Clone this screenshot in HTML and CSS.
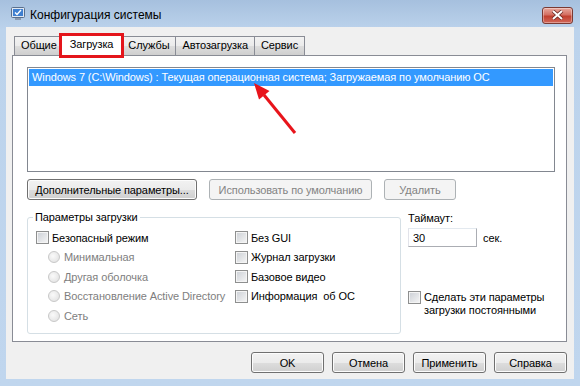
FILE: index.html
```html
<!DOCTYPE html>
<html lang="ru">
<head>
  <meta charset="UTF-8" />
  <title>Конфигурация системы</title>
  <link rel="stylesheet" href="styles.css">
</head>
<body>
  <div class="window">

    <!-- Title bar -->
    <div class="titlebar">
      <svg class="app-icon" width="14" height="14" viewBox="0 0 14 14">
        <rect x="0.5" y="0.5" width="13" height="10" rx="1" fill="#dfe8f3" stroke="#5a6f8c"/>
        <rect x="2" y="2" width="10" height="7" fill="#3f7fd0"/>
        <path d="M4 5.5 L6 7.5 L10 3" stroke="#fff" stroke-width="1.4" fill="none"/>
        <rect x="4" y="11" width="6" height="2" fill="#8a9ab0"/>
      </svg>
      <span class="title">Конфигурация системы</span>
      <div class="close-btn">
        <svg width="13" height="10" viewBox="0 0 13 10">
          <path d="M2 1 L11 9 M11 1 L2 9" stroke="#6a2a24" stroke-width="3.6"/>
          <path d="M2 1 L11 9 M11 1 L2 9" stroke="#fff" stroke-width="2"/>
        </svg>
      </div>
    </div>

    <div class="client">
      <div class="tabs">
        <div class="tab">Общие</div>
        <div class="tab active">Загрузка</div>
        <div class="tab">Службы</div>
        <div class="tab">Автозагрузка</div>
        <div class="tab">Сервис</div>
      </div>

      <div class="panel">
        <div class="listbox">
          <div class="list-item selected">Windows 7 (C:\Windows) : Текущая операционная система; Загружаемая по умолчанию ОС</div>
        </div>

        <div class="list-actions">
          <button class="btn btn-wide">Дополнительные параметры...</button>
          <button class="btn btn-default" disabled>Использовать по умолчанию</button>
          <button class="btn btn-delete" disabled>Удалить</button>
        </div>

        <div class="options">
          <fieldset class="group">
            <legend>Параметры загрузки</legend>
            <div class="group-cols">
              <div class="col">
                <div class="opt"><span class="check"></span>Безопасный режим</div>
                <div class="opt sub disabled"><span class="radio"></span>Минимальная</div>
                <div class="opt sub disabled"><span class="radio"></span>Другая оболочка</div>
                <div class="opt sub disabled"><span class="radio"></span>Восстановление Active Directory</div>
                <div class="opt sub disabled"><span class="radio"></span>Сеть</div>
              </div>
              <div class="col">
                <div class="opt"><span class="check"></span>Без GUI</div>
                <div class="opt"><span class="check"></span>Журнал загрузки</div>
                <div class="opt"><span class="check"></span>Базовое видео</div>
                <div class="opt"><span class="check"></span>Информация&nbsp; об ОС</div>
              </div>
            </div>
          </fieldset>

          <div class="timeout">
            <div class="timeout-label">Таймаут:</div>
            <div class="timeout-row">
              <input class="timeout-input" type="text" value="30">
              <span>сек.</span>
            </div>
            <div class="opt persist"><span class="check"></span><span>Сделать эти параметры<br>загрузки постоянными</span></div>
          </div>
        </div>
      </div>

      <div class="footer">
        <button class="btn">OK</button>
        <button class="btn">Отмена</button>
        <button class="btn">Применить</button>
        <button class="btn">Справка</button>
      </div>
    </div>

    <!-- red annotation arrow -->
    <svg class="arrow" width="580" height="386" viewBox="0 0 580 386">
      <line x1="295" y1="133" x2="264" y2="95" stroke="#e8141b" stroke-width="3"/>
      <polygon points="254,83 269.5,91 259,99.5" fill="#e8141b"/>
    </svg>
  </div>
</body>
</html>
```

FILE: styles.css
```css
body {
  margin: 0;
  padding: 0;
  font-family: "Liberation Sans", Arial, sans-serif;
  font-size: 11px;
  letter-spacing: -0.1px;
  color: #000;
}
.window {
  position: relative;
  width: 580px;
  height: 386px;
  box-sizing: border-box;
  padding: 0 6px 7px 6px;
  background: linear-gradient(#a6c0de, #bcd3ec 30px, #c0d6ee);
  display: flex;
  flex-direction: column;
  overflow: hidden;
}

/* title bar */
.titlebar {
  height: 27px;
  flex: none;
  display: flex;
  align-items: center;
  padding-left: 5px;
}
.app-icon {
  margin-right: 5px;
  margin-top: 1px;
}
.title {
  font-size: 12px;
  letter-spacing: 0;
  color: #000;
  margin-top: 3px;
}
.close-btn {
  margin-left: auto;
  margin-top: 3px;
  margin-right: 1px;
  width: 31px;
  height: 17px;
  box-sizing: border-box;
  border: 1px solid #7a3a33;
  border-radius: 3px;
  background: linear-gradient(#e8a99e, #d46f62 45%, #c2402f 55%, #d2685a);
  box-shadow: inset 0 0 0 1px rgba(255, 255, 255, 0.35);
  display: flex;
  align-items: center;
  justify-content: center;
}

/* client area */
.client {
  flex: 1;
  background: #f0f0f0;
  padding: 6px 7px 0 6px;
  display: flex;
  flex-direction: column;
}

.tabs {
  display: flex;
  align-items: flex-end;
  height: 22px;
  padding-left: 2px;
  position: relative;
  z-index: 1;
}
.tab {
  height: 19px;
  box-sizing: border-box;
  padding: 0 6px;
  border: 1px solid #898c95;
  border-bottom: none;
  margin-right: -1px;
  background: linear-gradient(#f2f2f2, #ebebeb 50%, #dddddd 51%, #cfcfcf);
  line-height: 17px;
  white-space: nowrap;
}
.tab.active {
  height: 21px;
  margin: 0 -1px 0 -2px;
  padding: 0 8px;
  background: #fff;
  line-height: 17px;
  position: relative;
  top: 1px;
  outline: 3px solid #e4151b;
  outline-offset: -1px;
  z-index: 2;
}

.panel {
  background: #fff;
  border: 1px solid #898c95;
  height: 287px;
  box-sizing: border-box;
  padding: 11px 11px 0 14px;
}

.listbox {
  height: 105px;
  box-sizing: border-box;
  border: 1px solid #828790;
  padding: 1px;
}
.list-item {
  height: 17px;
  line-height: 17px;
  padding-left: 3px;
  white-space: nowrap;
}
.list-item.selected {
  background: #3399ff;
  color: #fff;
}

.list-actions {
  display: flex;
  gap: 12px;
  margin-top: 7px;
}

.btn {
  font-family: inherit;
  font-size: 11px;
  letter-spacing: -0.1px;
  height: 21px;
  padding: 0 4px;
  border: 1px solid #707070;
  border-radius: 3px;
  background: linear-gradient(#f2f2f2, #ebebeb 50%, #dddddd 51%, #cfcfcf);
  box-shadow: inset 0 0 0 1px #fcfcfc;
  color: #000;
  white-space: nowrap;
}
.btn:disabled {
  border-color: #adb2b5;
  background: #f4f4f4;
  box-shadow: none;
  color: #838383;
}
.btn-wide { width: 170px; }
.btn-default { width: 163px; }
.btn-delete { width: 72px; }

.options {
  display: flex;
  gap: 7px;
  margin-top: 11px;
}

.group {
  margin: 0;
  width: 374px;
  height: 123px;
  box-sizing: border-box;
  border: 1px solid #d5dfe5;
  border-radius: 3px;
  padding: 5px 0 0 8px;
}
.group legend {
  padding: 0 2px;
  margin-left: -3px;
  color: #000;
}
.group-cols {
  display: grid;
  grid-template-columns: 199px auto;
}

.opt {
  display: flex;
  align-items: center;
  height: 19.5px;
  white-space: nowrap;
}
.opt.sub {
  padding-left: 12px;
}
.opt.disabled {
  color: #7e7e7e;
}

.check {
  width: 13px;
  height: 13px;
  box-sizing: border-box;
  border: 1px solid #8e8f8f;
  background: linear-gradient(135deg, #cbcfd5, #f6f6f6);
  box-shadow: inset 0 0 0 1px #f4f4f4;
  margin-right: 3px;
  flex: none;
}
.radio {
  width: 12px;
  height: 12px;
  box-sizing: border-box;
  border: 1px solid #c8c8c8;
  border-radius: 50%;
  background: radial-gradient(circle at 40% 40%, #fafafa, #dedede);
  margin-right: 4px;
  flex: none;
}

.timeout {
  flex: 1;
  padding-top: 1px;
}
.timeout-label {
  height: 15px;
}
.timeout-row {
  display: flex;
  align-items: center;
  gap: 6px;
  margin-top: 1px;
}
.timeout-input {
  width: 69px;
  height: 19px;
  box-sizing: border-box;
  border: 1px solid #abadb3;
  border-top-color: #e3e9ef;
  border-left-color: #e2e3ea;
  padding: 0 4px;
  font-family: inherit;
  font-size: 11px;
}
.opt.persist {
  margin-top: 44px;
  align-items: flex-start;
  height: auto;
  line-height: 13px;
}
.opt.persist .check {
  margin-top: 0;
}

.footer {
  display: flex;
  justify-content: flex-end;
  gap: 8px;
  margin-top: 10px;
}
.footer .btn {
  width: 73px;
}

.arrow {
  position: absolute;
  left: 0;
  top: 0;
  pointer-events: none;
}
```
